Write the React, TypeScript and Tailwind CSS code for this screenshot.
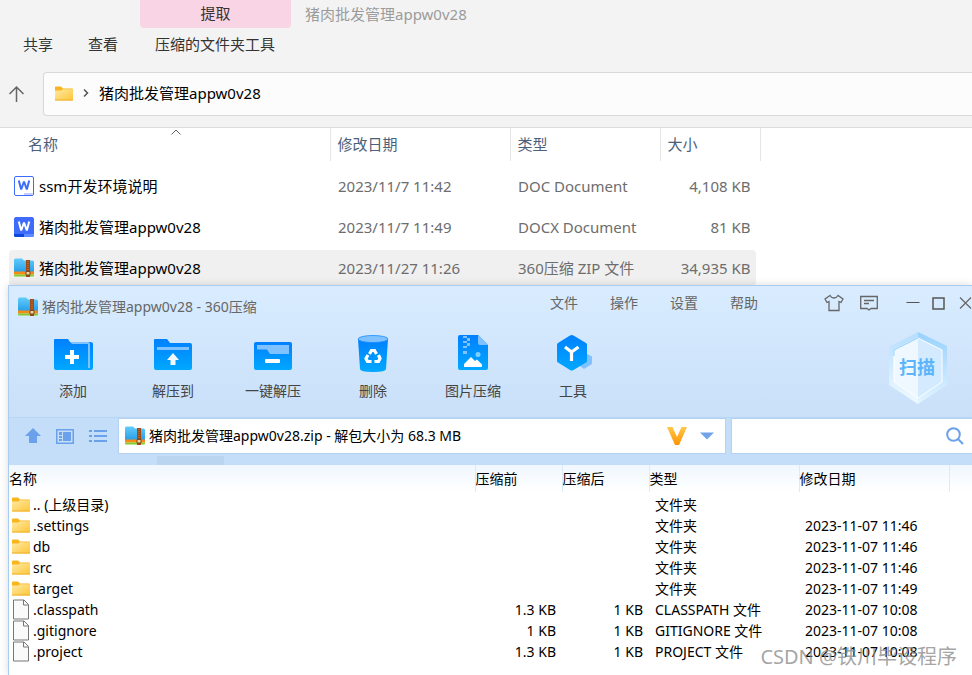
import type { ReactNode } from 'react';

interface ExplorerFile {
  name: string;
  date: string;
  type: string;
  size: string;
  icon: 'doc' | 'docx' | 'zip';
  selected?: boolean;
}

interface ZipEntry {
  name: string;
  before: string;
  after: string;
  type: string;
  date: string;
  folder?: boolean;
}

const files: ExplorerFile[] = [
  { name: 'ssm开发环境说明', date: '2023/11/7 11:42', type: 'DOC Document', size: '4,108 KB', icon: 'doc' },
  { name: '猪肉批发管理appw0v28', date: '2023/11/7 11:49', type: 'DOCX Document', size: '81 KB', icon: 'docx' },
  { name: '猪肉批发管理appw0v28', date: '2023/11/27 11:26', type: '360压缩 ZIP 文件', size: '34,935 KB', icon: 'zip', selected: true },
];

const entries: ZipEntry[] = [
  { name: '.. (上级目录)', before: '', after: '', type: '文件夹', date: '', folder: true },
  { name: '.settings', before: '', after: '', type: '文件夹', date: '2023-11-07 11:46', folder: true },
  { name: 'db', before: '', after: '', type: '文件夹', date: '2023-11-07 11:46', folder: true },
  { name: 'src', before: '', after: '', type: '文件夹', date: '2023-11-07 11:46', folder: true },
  { name: 'target', before: '', after: '', type: '文件夹', date: '2023-11-07 11:49', folder: true },
  { name: '.classpath', before: '1.3 KB', after: '1 KB', type: 'CLASSPATH 文件', date: '2023-11-07 10:08' },
  { name: '.gitignore', before: '1 KB', after: '1 KB', type: 'GITIGNORE 文件', date: '2023-11-07 10:08' },
  { name: '.project', before: '1.3 KB', after: '1 KB', type: 'PROJECT 文件', date: '2023-11-07 10:08' },
];

const FolderIcon = () => (
  <svg width="18" height="15" viewBox="0 0 18 15" className="shrink-0">
    <defs>
      <linearGradient id="folder" x1="0" y1="0" x2="1" y2="1">
        <stop offset="0" stopColor="#ffe9a6" />
        <stop offset="1" stopColor="#fdc637" />
      </linearGradient>
    </defs>
    <path d="M0 1.5Q0 .5 1 .5H6L8 2.5H17Q18 2.5 18 3.5V7H0Z" fill="#f8b61c" />
    <path d="M0 4.5H6L8 3.2H18V13.5Q18 14.5 17 14.5H1Q0 14.5 0 13.5Z" fill="url(#folder)" />
    <path d="M0 14H18" stroke="#efb02c" />
  </svg>
);

const PageIcon = () => (
  <svg width="18" height="21" viewBox="0 0 18 21" className="shrink-0">
    <path d="M1.5 1H12L16.5 5.5V20H1.5Z" fill="#fafafa" stroke="#777" />
    <path d="M11.5 1V6H16.5" fill="none" stroke="#777" />
  </svg>
);

const WordIcon = ({ filled }: { filled: boolean }) => (
  <svg width="20" height="20" viewBox="0 0 20 20" className="shrink-0">
    <rect x=".5" y=".5" width="19" height="19" rx="1.5" fill={filled ? '#3e6bfa' : '#fff'} stroke="#3e6bfa" />
    {filled ? <path d="M0 17H10V20H1.5Q0 20 0 18.5Z" fill="#0b49de" /> : <path d="M10 17H19V19H10Z" fill="#c3d0ff" />}
    {filled && <path d="M10 17H20V18.5Q20 20 18.5 20H10Z" fill="#5c8bff" />}
    <path
      d="M4.8 4.5L7.2 13.5L10 5.5L12.8 13.5L15.2 4.5"
      fill="none"
      stroke={filled ? '#fff' : '#3e6bfa'}
      strokeWidth="2"
      strokeLinejoin="bevel"
    />
  </svg>
);

const ZipIcon = () => (
  <svg width="20" height="20" viewBox="0 0 20 20" className="shrink-0">
    <defs>
      <linearGradient id="zipBlue" x1="0" y1="0" x2="0" y2="1">
        <stop offset="0" stopColor="#62cbfa" />
        <stop offset="1" stopColor="#239be8" />
      </linearGradient>
    </defs>
    <path d="M0 2Q0 .5 1.5 .5H8L10 2.5H18.5Q20 2.5 20 4V15H0Z" fill="url(#zipBlue)" />
    <path d="M0 13.5H20V16.5H0Z" fill="#f58a16" />
    <path d="M0 16.5H20V17.5Q20 18.5 19 18.5H1Q0 18.5 0 17.5Z" fill="#86cc28" />
    <path d="M12 2H16V19H12Z" fill="#9b4a18" />
    <path d="M14 3V13" stroke="#d97f38" strokeWidth="1" strokeDasharray="1 1" />
    <path d="M12 13.5H16V17H12Z" fill="#f2d29a" stroke="#7c4a26" />
  </svg>
);

// big toolbar drawings
const ToolDefs = () => (
  <svg width="0" height="0" className="absolute">
    <defs>
      <linearGradient id="tool" x1="0" y1="0" x2="0" y2="1">
        <stop offset="0" stopColor="#0080ff" />
        <stop offset="1" stopColor="#00a8ff" />
      </linearGradient>
    </defs>
  </svg>
);

const AddIcon = () => (
  <svg width="40" height="40" viewBox="0 0 40 40">
    <path d="M1 5Q1 4 2 4H15L17 7H37Q40 7 40 9V33Q40 35 38 35H3Q1 35 1 33Z" fill="url(#tool)" />
    <path d="M17 7H35Q37 7 37 9V33H35V9H19Z" fill="#80c2ff" />
    <path d="M17 15H21V20H26V24H21V29H17V24H12V20H17Z" fill="#fff" />
  </svg>
);

const ExtractIcon = () => (
  <svg width="40" height="40" viewBox="0 0 40 40">
    <path d="M1 5Q1 4 2 4H14L17 8H37Q39 8 39 10V33Q39 35 37 35H3Q1 35 1 33Z" fill="url(#tool)" />
    <path d="M4 12H36V15H4Z" fill="#80c2ff" />
    <path d="M20 18L26 25H22.5V30H17.5V25H14Z" fill="#f2faff" />
  </svg>
);

const OneClickIcon = () => (
  <svg width="40" height="40" viewBox="0 0 40 40">
    <rect x="1" y="7" width="38" height="28" rx="2" fill="url(#tool)" />
    <path d="M4 10H36V19H17L14 14.5H4Z" fill="#80c2ff" />
    <rect x="12" y="24" width="15" height="4" rx="1" fill="#fff" />
  </svg>
);

const DeleteIcon = () => (
  <svg width="40" height="40" viewBox="0 0 40 40">
    <path d="M5 4L7 34Q7 37 20 37Q33 37 33 34L35 4Z" fill="url(#tool)" />
    <ellipse cx="20" cy="4" rx="15" ry="3.5" fill="#80c2ff" stroke="#1b8cff" strokeWidth=".8" />
    <g fill="none" stroke="#fff" strokeWidth="3.2">
      <path d="M16.5 19L18.5 15.5H21.5L23.5 19" />
      <path d="M25.5 20L27 23.5L25.5 26.5H21.5" />
      <path d="M18.5 26.5H14.5L13 23.5L15 20" />
    </g>
  </svg>
);

const PictureIcon = () => (
  <svg width="40" height="40" viewBox="0 0 40 40">
    <path d="M5 2Q5 0 7 0H25L35 10V33Q35 35 33 35H7Q5 35 5 33Z" fill="url(#tool)" />
    <path d="M25 0L35 10H27Q25 10 25 8Z" fill="#80c2ff" />
    <path d="M10 1H14V3H17V6H14V8H10V6H14V3H10ZM14 8H17V11H14V13H10V11H14ZM10 16H14V19H10Z" fill="#80c2ff" />
    <circle cx="25" cy="19.5" r="2.5" fill="#80d0ff" />
    <path d="M11 32V29L18 22L22 26L24 24.5L29 29.5V32Z" fill="#fff" />
  </svg>
);

const WrenchIcon = () => (
  <svg width="40" height="40" viewBox="0 0 40 40">
    <path d="M34 19L39 21.5V29L31 34L27 31Z" fill="#80c2ff" />
    <path d="M18.5 0Q19.5 0 20.5 .5L33 8Q34 8.5 34 10V26Q34 27 33 27.5L20.5 35Q18.5 36 17 35L5 27.5Q4 27 4 26V10Q4 8.5 5 8L17 .5Z" fill="url(#tool)" />
    <path d="M12 12L18.5 17L25.5 12M18.5 16V26" fill="none" stroke="#fff" strokeWidth="3.2" />
  </svg>
);

const ScanShield = () => (
  <svg width="62" height="74" viewBox="0 0 62 74">
    <defs>
      <linearGradient id="shieldL" x1="0" y1="0" x2="0" y2="1">
        <stop offset="0" stopColor="#b5defe" />
        <stop offset="1" stopColor="#f0faff" />
      </linearGradient>
      <linearGradient id="shieldR" x1="0" y1="0" x2="0" y2="1">
        <stop offset="0" stopColor="#97d1fd" />
        <stop offset="1" stopColor="#e3f4ff" />
      </linearGradient>
    </defs>
    <path d="M30 0L1 15V53L30 72Z" fill="url(#shieldL)" />
    <path d="M30 0L59 14V53L30 72Z" fill="url(#shieldR)" />
    <path d="M30 6L6 18V50L30 66Z" fill="#f0f8ff" />
    <path d="M30 6L54 18V50L30 66Z" fill="#d3eaff" />
    <path d="M30 6L54 18V50L30 66L6 50V18Z" fill="none" stroke="#fff" />
    <path d="M6 24V18L30 6" fill="none" stroke="#8fd0fd" />
  </svg>
);

const tools: { label: string; icon: ReactNode }[] = [
  { label: '添加', icon: <AddIcon /> },
  { label: '解压到', icon: <ExtractIcon /> },
  { label: '一键解压', icon: <OneClickIcon /> },
  { label: '删除', icon: <DeleteIcon /> },
  { label: '图片压缩', icon: <PictureIcon /> },
  { label: '工具', icon: <WrenchIcon /> },
];

const Explorer = () => (
  <section className="text-[15px] leading-5">
    <header className="border-b border-[#dcdcdc] bg-[#f3f3f3]">
      <div className="flex pl-[140px]">
        <button className="h-7 w-[151px] rounded-b bg-[#f9d4e5] pb-[2px] text-[#333]">提取</button>
        <span className="pt-1 pl-[14px] text-[#9b9b9b]">猪肉批发管理appw0v28</span>
      </div>
      <nav className="flex pt-[6px] pl-[23px] text-[#333]">
        <button className="mr-[35px]">共享</button>
        <button className="mr-[37px]">查看</button>
        <button>压缩的文件夹工具</button>
      </nav>
      <div className="flex items-center pt-[18px] pb-[11px] pl-2">
        <button aria-label="上移" className="mr-[18px]">
          <svg width="17" height="18" viewBox="0 0 17 18" fill="none" stroke="#666" strokeWidth="1.5">
            <path d="M8.5 17V2M1.5 9L8.5 2L15.5 9" />
          </svg>
        </button>
        <div className="flex h-11 flex-1 items-center rounded-l border border-r-0 border-[#d8d8d8] bg-[#fcfcfc] pb-[2px] pl-[11px]">
          <FolderIcon />
          <svg width="8" height="10" viewBox="0 0 8 10" className="mx-[9px]" fill="none" stroke="#555" strokeWidth="1.5">
            <path d="M2 1.5L5.5 5L2 8.5" />
          </svg>
          <span className="text-black">猪肉批发管理appw0v28</span>
        </div>
      </div>
    </header>

    <table className="ml-[9px] w-[752px] table-fixed border-collapse">
      <thead>
        <tr className="h-[33px] text-left text-[#4c607a]">
          <th className="relative w-[321px] border-r border-[#e5e5e5] pb-[2px] pl-[19px] font-normal">
            名称
            <svg width="10" height="6" viewBox="0 0 10 6" className="absolute top-px left-[162px]" fill="none" stroke="#666">
              <path d="M.5 5.5L5 1L9.5 5.5" />
            </svg>
          </th>
          <th className="w-[180px] border-r border-[#e5e5e5] pb-[2px] pl-[7px] font-normal">修改日期</th>
          <th className="w-[150px] border-r border-[#e5e5e5] pb-[2px] pl-[7px] font-normal">类型</th>
          <th className="border-r border-[#e5e5e5] pb-[2px] pl-[7px] font-normal">大小</th>
        </tr>
      </thead>
      <tbody className="text-[#6d6d6d] before:block before:h-[5px]">
        {files.map((f, i) => {
          const cell = f.selected ? 'flex h-9 items-center bg-[#f0f0f0]' : 'flex h-9 items-center';
          return (
            <tr key={i}>
              <td className="pt-[2px] pb-[3px]">
                <div className={`${cell} gap-[5px] rounded-l pl-[5px] text-black`}>
                  {f.icon === 'zip' ? <ZipIcon /> : <WordIcon filled={f.icon === 'docx'} />}
                  {f.name}
                </div>
              </td>
              <td className="pt-[2px] pb-[3px]">
                <div className={`${cell} pl-2`}>{f.date}</div>
              </td>
              <td className="pt-[2px] pb-[3px]">
                <div className={`${cell} pl-2`}>{f.type}</div>
              </td>
              <td className="pt-[2px] pr-[5px] pb-[3px]">
                <div className={`${cell} justify-end rounded-r pr-[5px]`}>{f.size}</div>
              </td>
            </tr>
          );
        })}
      </tbody>
    </table>
  </section>
);

const TitleBar = () => (
  <div className="flex h-9 items-center justify-between pl-[9px] text-[#666]">
    <div className="flex items-center gap-1 pt-[6px]">
      <ZipIcon />
      <span>猪肉批发管理appw0v28 - 360压缩</span>
    </div>
    <div className="flex items-center pb-[2px]">
      <nav className="mr-[66px] flex gap-8">
        <button>文件</button>
        <button>操作</button>
        <button>设置</button>
        <button>帮助</button>
      </nav>
      <div className="flex items-center">
        <button aria-label="皮肤" className="mr-4">
          <svg width="20" height="18" viewBox="0 0 20 18" fill="none" stroke="#666" strokeWidth="1.3">
            <path d="M6 1.5L1 5L3 8.5L5 7.5V16.5H15V7.5L17 8.5L19 5L14 1.5Q12.5 4 10 4Q7.5 4 6 1.5Z" />
          </svg>
        </button>
        <button aria-label="反馈" className="mr-7">
          <svg width="18" height="16" viewBox="0 0 18 16" fill="none" stroke="#666" strokeWidth="1.3">
            <path d="M.7 1.5H17.3V13.5H11L9 15L7 13.5H.7Z" />
            <path d="M4 5.5H14M4 8.5H9" />
          </svg>
        </button>
        <button aria-label="最小化" className="mr-3">
          <svg width="14" height="14" viewBox="0 0 14 14" stroke="#555">
            <path d="M.5 6.5H13.5" />
          </svg>
        </button>
        <button aria-label="最大化" className="mr-[14px]">
          <svg width="13" height="13" viewBox="0 0 13 13" fill="none" stroke="#555" strokeWidth="1.5">
            <rect x="1" y="1" width="11" height="11" />
          </svg>
        </button>
        <button aria-label="关闭">
          <svg width="13" height="14" viewBox="0 0 13 14" stroke="#666" strokeWidth="1.2">
            <path d="M1 1.5L12 12.5M12 1.5L1 12.5" />
          </svg>
        </button>
      </div>
    </div>
  </div>
);

const AddressBar = () => (
  <div className="flex items-center text-black">
    <div className="flex w-[109px] items-center gap-[15px] pl-4">
      <button aria-label="上级">
        <svg width="16" height="16" viewBox="0 0 16 16" fill="#6ba0ea">
          <path d="M8 0L16 8H12V15H4V8H0Z" />
        </svg>
      </button>
      <button aria-label="预览">
        <svg width="18" height="15" viewBox="0 0 18 15" fill="#6ba0ea">
          <path d="M0 0H18V15H0ZM1.5 1.5V13.5H16.5V1.5Z" fillRule="evenodd" />
          <path d="M7 3H15V12H7ZM3 3H6V6H3ZM3 7H6V9H3ZM3 10H6V12H3Z" />
        </svg>
      </button>
      <button aria-label="列表">
        <svg width="18" height="14" viewBox="0 0 18 14" stroke="#6ba0ea" strokeWidth="2">
          <path d="M0 2H3M5 2H18M0 7H3M5 7H18M0 12H3M5 12H18" />
        </svg>
      </button>
    </div>
    <div className="flex h-9 w-[608px] items-center border border-[#b3d2f2] bg-white pl-[6px]">
      <ZipIcon />
      <span className="flex-1 pl-1">猪肉批发管理appw0v28.zip - 解包大小为 68.3 MB</span>
      <svg width="20" height="18" viewBox="0 0 20 18" className="mr-[13px]">
        <defs>
          <linearGradient id="vip" x1="0" y1="0" x2="0" y2="1">
            <stop offset="0" stopColor="#ffc84a" />
            <stop offset="1" stopColor="#ff9200" />
          </linearGradient>
        </defs>
        <path d="M0 0H5.5L10 10L14.5 0H20L12 18H8Z" fill="url(#vip)" />
      </svg>
      <button aria-label="展开路径" className="mr-[11px]">
        <svg width="14" height="8" viewBox="0 0 14 8">
          <path d="M0 .5H14L7 7.5Z" fill="#70a3ea" />
        </svg>
      </button>
    </div>
    <label className="ml-[5px] flex h-9 min-w-0 flex-1 items-center border border-r-0 border-[#b3d2f2] bg-white pr-2">
      <input aria-label="搜索" className="min-w-0 flex-1 bg-transparent px-2 outline-none" />
      <svg width="18" height="18" viewBox="0 0 18 18" fill="none" stroke="#6ba0ea" strokeWidth="2">
        <circle cx="7.5" cy="7.5" r="6.3" />
        <path d="M11.5 11.5L17 17" />
      </svg>
    </label>
  </div>
);

const ZipTable = () => (
  <table className="w-full table-fixed border-collapse text-black">
    <thead>
      <tr className="h-[27px] bg-linear-to-b from-[#f0f7ff] to-white text-left">
        <th className="w-[466px] border-r border-[#dceafa] font-normal">名称</th>
        <th className="w-[87px] border-r border-[#dceafa] font-normal">压缩前</th>
        <th className="w-[87px] border-r border-[#dceafa] font-normal">压缩后</th>
        <th className="w-[150px] border-r border-[#dceafa] font-normal">类型</th>
        <th className="w-[150px] border-r border-[#dceafa] font-normal">修改日期</th>
        <th />
      </tr>
    </thead>
    <tbody className="before:block before:h-[2px]">
      {entries.map(e => (
        <tr key={e.name} className="h-[21px] leading-[21px]">
          <td>
            <div className="flex h-[21px] items-center gap-[3px] pl-[3px]">
              {e.folder ? <FolderIcon /> : <PageIcon />}
              {e.name}
            </div>
          </td>
          <td className="pr-[6px] text-right">{e.before}</td>
          <td className="pr-[6px] text-right">{e.after}</td>
          <td className="pl-[6px]">{e.type}</td>
          <td className="pl-[6px]">{e.date}</td>
          <td />
        </tr>
      ))}
    </tbody>
  </table>
);

const ZipWindow = () => (
  <section className="-mt-1 ml-2 flex-1 border-t border-l border-[#a9cdf0] bg-white text-sm leading-5 shadow-[0_0_8px_rgba(0,0,0,0.15)]">
    <div className="bg-linear-to-b from-[#d9ecff] to-[#c9e0f9] pb-[11px]">
      <TitleBar />
      <div className="flex justify-between pr-[22px] pl-[14px]">
        <ToolDefs />
        <div className="flex pt-[13px]">
          {tools.map(t => (
            <button key={t.label} className="flex w-[100px] flex-col items-center gap-[6px] text-[#444]">
              {t.icon}
              {t.label}
            </button>
          ))}
        </div>
        <button className="relative mt-[10px] h-[74px]">
          <ScanShield />
          <span className="absolute inset-0 flex items-center justify-center pr-1 pb-1 text-lg font-bold text-[#5cb5fb]">扫描</span>
        </button>
      </div>
    </div>
    <div className="border-t border-[#b9d6f5] bg-[#c4def9]">
      <AddressBar />
      <div className="flex h-[11px] items-end pl-[148px]">
        <div className="h-[9px] w-[67px] bg-[#b9d5f0]" />
      </div>
    </div>
    <ZipTable />
  </section>
);

export default function App() {
  return (
    <main className="relative flex min-h-screen flex-col overflow-hidden bg-white font-['Noto_Sans','Noto_Sans_CJK_SC',sans-serif]">
      <Explorer />
      <ZipWindow />
      <p className="absolute right-[15px] bottom-1 text-xl text-[#8c8c8c]/80">CSDN @铁川毕设程序</p>
    </main>
  );
}
